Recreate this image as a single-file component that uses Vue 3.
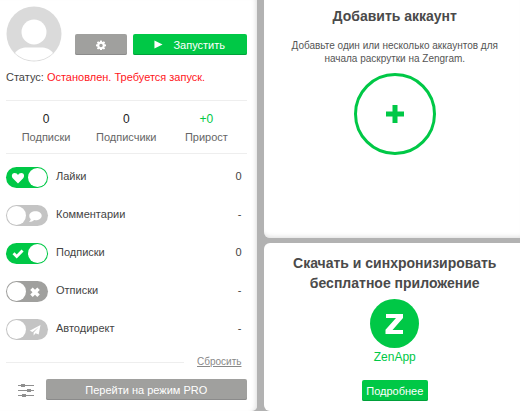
<script setup>
import { ref } from 'vue'

const stats = [
  { label: 'Подписки', value: '0' },
  { label: 'Подписчики', value: '0' },
  { label: 'Прирост', value: '+0', growth: true },
]

const options = ref([
  { id: 'likes', label: 'Лайки', value: '0', on: true, icon: 'heart', tone: 'light' },
  { id: 'comments', label: 'Комментарии', value: '-', on: false, icon: 'comment', tone: 'light' },
  { id: 'follows', label: 'Подписки', value: '0', on: true, icon: 'check', tone: 'light' },
  { id: 'unfollows', label: 'Отписки', value: '-', on: false, icon: 'cross', tone: 'dark' },
  { id: 'direct', label: 'Автодирект', value: '-', on: false, icon: 'plane', tone: 'light' },
])
</script>

<template>
  <main class="page">
    <section class="card account">
      <div class="top">
        <svg class="avatar" viewBox="0 0 56 56" aria-hidden="true">
          <circle cx="28" cy="28" r="27.500" fill="#dadada" />
          <circle cx="28" cy="26" r="12.500" fill="#fff" />
          <path d="M9 47C12 43 16 41.500 21 41.500h14c5 0 9 1.500 12 5.500C42 52 35 54.500 28 54.500S14 52 9 47z" fill="#fff" />
        </svg>
        <button class="btn gray settings" type="button" aria-label="Настройки">
          <svg class="gear" viewBox="0 0 20 20">
            <path fill-rule="evenodd" fill="#fff" d="M8.300 1h3.400l.5 2.600 1.400.6 2.200-1.500 2.400 2.400-1.500 2.200.6 1.400 2.700.5v3.500l-2.700.5-.6 1.400 1.500 2.200-2.400 2.400-2.200-1.500-1.400.6-.5 2.700H8.300l-.5-2.700-1.400-.6-2.200 1.500-2.400-2.400 1.500-2.200-.6-1.400L0 12.700V9.200l2.700-.5.6-1.400-1.500-2.200 2.400-2.400 2.200 1.500 1.400-.6zM10 7.300a3.500 3.500 0 1 0 0 7 3.500 3.500 0 0 0 0-7z" />
          </svg>
        </button>
        <button class="btn green start" type="button">
          <svg class="play" viewBox="0 0 10 10"><path d="M0.500 0.500L9.500 5L0.500 9.500z" fill="#fff" /></svg>
          <span>Запустить</span>
        </button>
      </div>

      <p class="status">Статус: <span class="stopped">Остановлен. Требуется запуск.</span></p>

      <dl class="stats">
        <div v-for="s in stats" :key="s.label" class="stat">
          <dt>{{ s.label }}</dt>
          <dd :class="{ growth: s.growth }">{{ s.value }}</dd>
        </div>
      </dl>

      <ul class="options">
        <li v-for="o in options" :key="o.id" class="option">
          <label class="option-label">
            <input v-model="o.on" class="check" type="checkbox" />
            <span class="track" :class="[o.tone, { on: o.on }]">
              <svg class="glyph" viewBox="0 0 14 14" aria-hidden="true">
                <path v-if="o.icon === 'heart'" d="M7 12.500L1.800 7.200C.2 5.300.6 2 3.700 2 5.300 2 6.300 2.900 7 3.900 7.700 2.900 8.700 2 10.300 2c3.100 0 3.500 3.300 1.900 5.200z" />
                <path v-else-if="o.icon === 'comment'" d="M7.500 2.200c3.600 0 6.200 2 6.200 4.500s-2.600 4.500-6.200 4.500l-1.300-.1C5 12.300 3.300 13 1 13c1-.8 1.700-1.700 1.800-2.900C1.700 9.300 1.300 8.200 1.300 6.700c0-2.500 2.600-4.500 6.200-4.500z" />
                <path v-else-if="o.icon === 'check'" d="M1.500 7.200L3.500 5.200 5.700 7.400 10.500 2.500 12.600 4.500 5.700 11.500z" />
                <path v-else-if="o.icon === 'cross'" d="M4.700 2.500L7 4.800 9.300 2.500 11.800 5 9.500 7.200 11.800 9.500 9.300 12 7 9.700 4.700 12 2.200 9.500 4.500 7.200 2.200 5z" />
                <path v-else d="M12.500 2L10.700 11.500 7.600 10.200 5.600 12.500V9.500L10.800 4 4.500 9 1.700 7.800z" />
              </svg>
              <span class="knob"></span>
            </span>
            <span class="name">{{ o.label }}</span>
          </label>
          <span class="value">{{ o.value }}</span>
        </li>
      </ul>

      <div class="reset">
        <a href="#reset">Сбросить</a>
      </div>

      <div class="mode">
        <svg class="sliders" viewBox="0 0 16 14" aria-hidden="true">
          <path d="M0 2.500h16M0 7.500h16M0 12.500h16" stroke="#8f8f8f" stroke-width="1" />
          <path d="M3 1h4v3H3zM9 6h4v3H9zM4 11h4v3H4z" fill="#8f8f8f" />
        </svg>
        <button class="btn gray pro" type="button">Перейти на режим PRO</button>
      </div>
    </section>

    <div class="side">
      <section class="card add">
        <h2>Добавить аккаунт</h2>
        <p>Добавьте один или несколько аккаунтов для начала раскрутки на Zengram.</p>
        <button class="plus" type="button" aria-label="Добавить аккаунт">
          <svg viewBox="0 0 20 20"><path d="M7.500 1h5v6.500H19v5h-6.500V19h-5v-6.500H1v-5h6.500z" fill="#00c846" /></svg>
        </button>
      </section>

      <section class="card app">
        <h2>Скачать и синхронизировать бесплатное приложение</h2>
        <svg class="logo" viewBox="0 0 49 49" aria-hidden="true">
          <circle cx="24.500" cy="24.500" r="24.500" fill="#00c846" />
          <path d="M16 15h17v4L22.500 31H33v4H15.500v-4.200L26 19H16z" fill="#fff" />
        </svg>
        <a class="app-name" href="#zenapp">ZenApp</a>
        <button class="btn green more" type="button">Подробнее</button>
      </section>
    </div>
  </main>
</template>

<style>
body {
  background: #b2b2b2;
}
</style>

<style scoped>
.page {
  box-sizing: border-box;
  min-height: 100vh;
  display: grid;
  grid-template-columns: minmax(0, 1fr) minmax(0, 1fr);
  gap: 7px;
  font: 11px/18px "Liberation Sans", Arial, sans-serif;
  color: #444;
}
.card {
  background: #fff;
}
.account {
  padding: 6px 10px 11px 6px;
  border-radius: 0 0 5px 0;
  box-shadow: inset -5px 0 5px -4px #ddd;
}
.top {
  display: flex;
  align-items: flex-end;
  gap: 6px;
  padding-bottom: 6px;
}
.avatar {
  width: 56px;
  height: 56px;
  margin-right: 7px;
}
.btn {
  box-sizing: border-box;
  height: 21px;
  padding: 0;
  border: 0;
  border-radius: 2px;
  font: 11px/20px "Liberation Sans", Arial, sans-serif;
  color: #fff;
  cursor: pointer;
}
.gray {
  background: #a0a09e;
  box-shadow: inset 0 -1px #8b8b8b;
}
.green {
  background: #00c846;
  box-shadow: inset 0 -1px #00a03a;
}
.top .btn {
  display: flex;
  align-items: center;
  justify-content: center;
  margin-bottom: 7px;
}
.settings {
  width: 52px;
}
.gear {
  width: 10px;
  height: 10px;
}
.start {
  flex: 1;
  gap: 10px;
}
.play {
  width: 9px;
  height: 9px;
}
.status {
  margin: 0;
}
.stopped {
  color: #ff1522;
}
.stats {
  display: grid;
  grid-template-columns: repeat(3, 1fr);
  margin: 14px 0 0;
  padding: 9px 0 7px;
  border: solid #eee;
  border-width: 1px 0;
  text-align: center;
}
.stat {
  display: flex;
  flex-direction: column-reverse;
}
.stat dt {
  color: #666;
}
.stat dd {
  margin: 0;
  font-size: 12px;
  color: #222;
}
.stat dd.growth {
  color: #00c846;
}
.options {
  list-style: none;
  margin: 0;
  padding: 13px 5px 13px 0;
  display: grid;
  gap: 17px;
}
.option,
.option-label {
  display: flex;
  align-items: center;
}
.option {
  justify-content: space-between;
}
.option-label {
  position: relative;
  gap: 8px;
  cursor: pointer;
}
.name,
.value {
  padding-bottom: 3px;
}
.check {
  position: absolute;
  inset: 0;
  margin: 0;
  opacity: 0;
}
.track {
  box-sizing: border-box;
  display: flex;
  flex-direction: row-reverse;
  align-items: center;
  justify-content: space-between;
  width: 42px;
  height: 21px;
  padding: 1px 6px 1px 1px;
  border-radius: 11px;
  background: #c4c4c4;
}
.track.dark {
  background: #a0a09e;
}
.track.on {
  flex-direction: row;
  padding: 1px 1px 1px 5px;
  background: #00c846;
}
.knob {
  width: 19px;
  height: 19px;
  border-radius: 50%;
  background: #fff;
}
.glyph {
  width: 14px;
  height: 14px;
  fill: #fff;
}
.reset {
  display: flex;
  align-items: center;
  gap: 13px;
  padding-right: 5px;
  font-size: 10px;
  line-height: 18px;
}
.reset::before {
  content: "";
  flex: 1;
  height: 1px;
  background: #eee;
}
.reset a {
  color: #888;
}
.mode {
  display: flex;
  align-items: center;
  gap: 12px;
  padding: 8px 0 0 12px;
}
.sliders {
  width: 16px;
  height: 14px;
}
.pro {
  flex: 1;
}
.side {
  display: flex;
  flex-direction: column;
  gap: 5px;
}
.side .card {
  display: flex;
  flex-direction: column;
  align-items: center;
  padding: 6px 0 10px 6px;
  border-radius: 6px 0 0 6px;
  text-align: center;
}
.side .add {
  flex: 1;
  border-top-left-radius: 0;
  box-shadow: inset 0 -5px 5px -4px #ddd;
}
h2 {
  margin: 0;
  max-width: 230px;
  font: bold 14px/20px "Liberation Sans", Arial, sans-serif;
  color: #4a4a4a;
}
.add p {
  margin: 13px 0 8px;
  max-width: 220px;
  font: 10px/13px "Liberation Sans", Arial, sans-serif;
  color: #555;
}
.plus {
  box-sizing: border-box;
  display: grid;
  place-items: center;
  width: 82px;
  height: 82px;
  padding: 0;
  border: 3px solid #00c846;
  border-radius: 50%;
  background: none;
  cursor: pointer;
}
.plus svg {
  width: 20px;
  height: 20px;
}
.side .app {
  padding-top: 10px;
}
.logo {
  width: 49px;
  height: 49px;
  margin-top: 6px;
}
.app-name {
  font-size: 12px;
  line-height: 18px;
  color: #00c846;
  text-decoration: none;
}
.more {
  width: 66px;
  margin-top: 14px;
}
</style>
